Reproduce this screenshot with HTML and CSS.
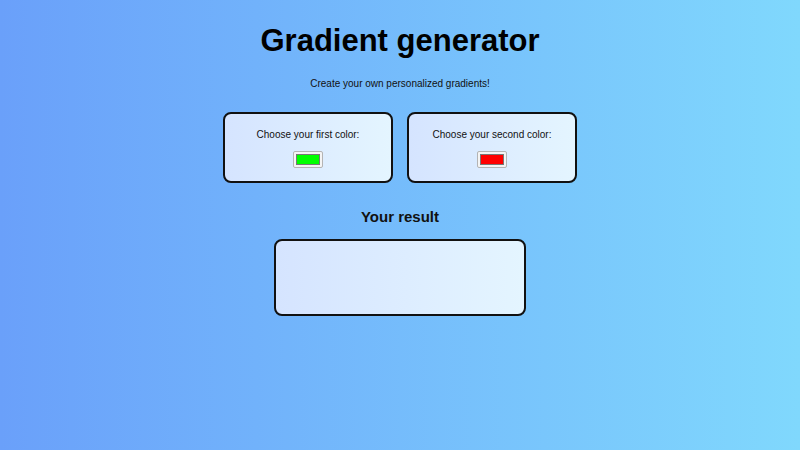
FILE: index.html
```html
<!DOCTYPE html>
<html lang="en">
<head>
<meta charset="utf-8">
<title>Gradient generator</title>
<link rel="stylesheet" href="styles.css">
</head>
<body>
<main class="page">
  <h1 class="title">Gradient generator</h1>
  <p class="subtitle">Create your own personalized gradients!</p>
  <section class="pickers">
    <div class="card">
      <label class="card-label" for="c1">Choose your first color:</label>
      <input class="swatch" id="c1" type="color" value="#00ff00">
    </div>
    <div class="card">
      <label class="card-label" for="c2">Choose your second color:</label>
      <input class="swatch" id="c2" type="color" value="#ff0000">
    </div>
  </section>
  <h2 class="result-title">Your result</h2>
  <div class="result"></div>
</main>
</body>
</html>
```

FILE: styles.css
```css
html, body {
  margin: 0;
  height: 100%;
}
body {
  background: linear-gradient(to right, #6aa0fa, #80d8fd);
  font-family: "Liberation Sans", Arial, sans-serif;
  color: #000;
}
.page {
  display: flex;
  flex-direction: column;
  align-items: center;
  padding-top: 21px;
}
.title {
  margin: 0;
  font-size: 31px;
  font-weight: bold;
  line-height: 40px;
}
.subtitle {
  margin: 16px 0 0;
  font-size: 10px;
  line-height: 14px;
  color: #111;
}
.pickers {
  display: flex;
  gap: 14px;
  margin-top: 21px;
}
.card {
  width: 166px;
  height: 67px;
  border: 2px solid #111;
  border-radius: 8px;
  background: linear-gradient(to right, #d5e4ff, #e4f5ff);
  display: flex;
  flex-direction: column;
  align-items: center;
}
.card-label {
  margin-top: 14px;
  font-size: 10px;
  line-height: 14px;
  color: #111;
}
.swatch {
  -webkit-appearance: none;
  appearance: none;
  margin-top: 9px;
  width: 30px;
  height: 17px;
  padding: 2px;
  box-sizing: border-box;
  border: 1px solid #b4b4b4;
  border-radius: 2px;
  background: #f4f4f4;
  cursor: pointer;
}
.swatch::-webkit-color-swatch-wrapper {
  padding: 0;
}
.swatch::-webkit-color-swatch {
  border: 1px solid #777;
  border-radius: 0;
}
.result-title {
  margin: 24px 0 0;
  font-size: 15px;
  line-height: 20px;
  font-weight: bold;
  color: #111;
}
.result {
  margin-top: 12px;
  width: 248px;
  height: 73px;
  border: 2px solid #111;
  border-radius: 8px;
  background: linear-gradient(to right, #d5e4ff, #e4f5ff);
}
```
